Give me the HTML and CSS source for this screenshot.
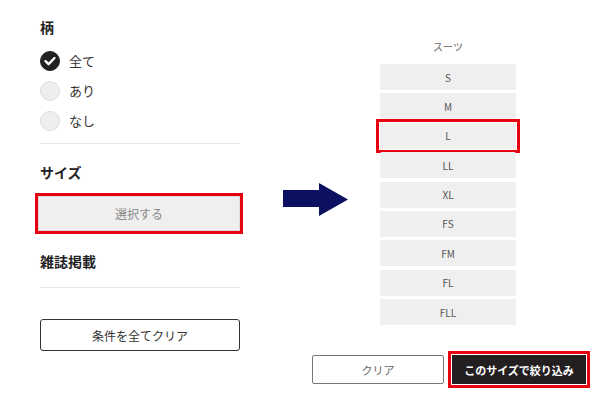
FILE: index.html
```html
<!DOCTYPE html>
<html lang="ja">
<head>
<meta charset="utf-8">
<link rel="stylesheet" href="styles.css">
</head>
<body>
<div class="page">
  <div class="filters">
    <h3 class="title title-first">柄</h3>
    <ul class="radios">
      <li class="radio-row"><span class="radio checked"><svg viewBox="0 0 20 20" width="20" height="20"><path d="M5.5 10.2 L8.6 13.2 L14.5 7" fill="none" stroke="#fff" stroke-width="2.4" stroke-linecap="round" stroke-linejoin="round"/></svg></span><span class="radio-label">全て</span></li>
      <li class="radio-row"><span class="radio"></span><span class="radio-label">あり</span></li>
      <li class="radio-row"><span class="radio"></span><span class="radio-label">なし</span></li>
    </ul>
    <div class="divider"></div>
    <h3 class="title title-size">サイズ</h3>
    <button class="select-btn">選択する</button>
    <h3 class="title title-mag">雑誌掲載</h3>
    <div class="divider divider-2"></div>
    <button class="clear-all">条件を全てクリア</button>
  </div>
  <div class="panel">
    <div class="panel-top">
      <svg class="arrow" viewBox="0 0 65 33" width="65" height="33"><polygon points="0,7 36,7 36,0 65,16.5 36,33 36,24 0,24" fill="#0b1160"/></svg>
      <div class="sizes">
        <div class="sizes-label">スーツ</div>
        <ul class="size-list">
          <li class="size">S</li>
          <li class="size">M</li>
          <li class="size marked">L</li>
          <li class="size">LL</li>
          <li class="size">XL</li>
          <li class="size">FS</li>
          <li class="size">FM</li>
          <li class="size">FL</li>
          <li class="size">FLL</li>
        </ul>
      </div>
    </div>
    <div class="actions">
      <button class="btn-clear">クリア</button>
      <button class="btn-apply">このサイズで絞り込み</button>
    </div>
  </div>
</div>
</body>
</html>
```

FILE: styles.css
```css
* { box-sizing: border-box; }
html, body { margin: 0; padding: 0; background: #fff; }
body {
  font-family: "Noto Sans CJK JP", "Noto Sans", sans-serif;
  color: #222;
  width: 600px;
  height: 400px;
  overflow: hidden;
}
ul { list-style: none; margin: 0; padding: 0; }
button { font-family: inherit; cursor: pointer; padding: 0; }

.page { display: flex; align-items: flex-start; }

.filters {
  width: 200px;
  margin-left: 40px;
  padding-top: 19px;
  display: flex;
  flex-direction: column;
}
.title {
  margin: 0;
  font-size: 14px;
  line-height: 17px;
  font-weight: 700;
  color: #222;
}
.radios { margin-top: 10px; }
.radio-row {
  height: 30px;
  display: flex;
  align-items: center;
}
.radio {
  width: 20px;
  height: 20px;
  border-radius: 50%;
  background: #eeeeee;
  border: 1px solid #dddddd;
  display: flex;
  align-items: center;
  justify-content: center;
  flex: none;
}
.radio.checked { background: #222; border-color: #222; }
.radio.checked svg { display: block; margin: -1px; }
.radio-label {
  margin-left: 9px;
  font-size: 13px;
  color: #333;
  line-height: 20px;
}
.divider {
  margin-top: 7px;
  height: 1px;
  background: #e6e6e6;
}
.title-size { margin-top: 20px; }
.select-btn {
  margin-top: 15px;
  margin-left: -2px;
  width: 202px;
  height: 35px;
  background: #efefef;
  border: 1px solid #dcdcdc;
  color: #888;
  font-size: 12px;
  outline: 3px solid #e60012;
  outline-offset: 0;
}
.title-mag { margin-top: 22px; }
.divider-2 { margin-top: 17px; }
.clear-all {
  margin-top: 31px;
  width: 200px;
  height: 32px;
  background: #fff;
  border: 1px solid #333;
  border-radius: 3px;
  font-size: 12px;
  color: #333;
}

.panel {
  margin-left: 43px;
  display: flex;
  flex-direction: column;
}
.panel-top { display: flex; align-items: flex-start; }
.arrow { display: block; margin-top: 183px; flex: none; }
.sizes {
  margin-left: 32px;
  width: 136px;
  padding-top: 40px;
}
.sizes-label {
  text-align: center;
  font-size: 10px;
  line-height: 14px;
  color: #666;
}
.size-list {
  margin-top: 10px;
  display: flex;
  flex-direction: column;
  gap: 3.4px;
}
.size {
  height: 26px;
  background: #efefef;
  border-radius: 2px;
  display: flex;
  align-items: center;
  justify-content: center;
  font-size: 10px;
  color: #555;
}
.size.marked {
  border-radius: 0;
  outline: 3px solid #e60012;
  outline-offset: 1px;
}
.actions {
  margin-top: 30px;
  margin-left: 29px;
  display: flex;
  gap: 8px;
}
.btn-clear {
  width: 132px;
  height: 29px;
  background: #fff;
  border: 1px solid #777;
  border-radius: 2px;
  font-size: 11px;
  color: #666;
}
.btn-apply {
  width: 134px;
  height: 29px;
  background: #231f20;
  border: none;
  border-radius: 0;
  font-size: 11px;
  font-weight: 700;
  color: #fff;
  outline: 3px solid #e60012;
  outline-offset: 1px;
}
```
